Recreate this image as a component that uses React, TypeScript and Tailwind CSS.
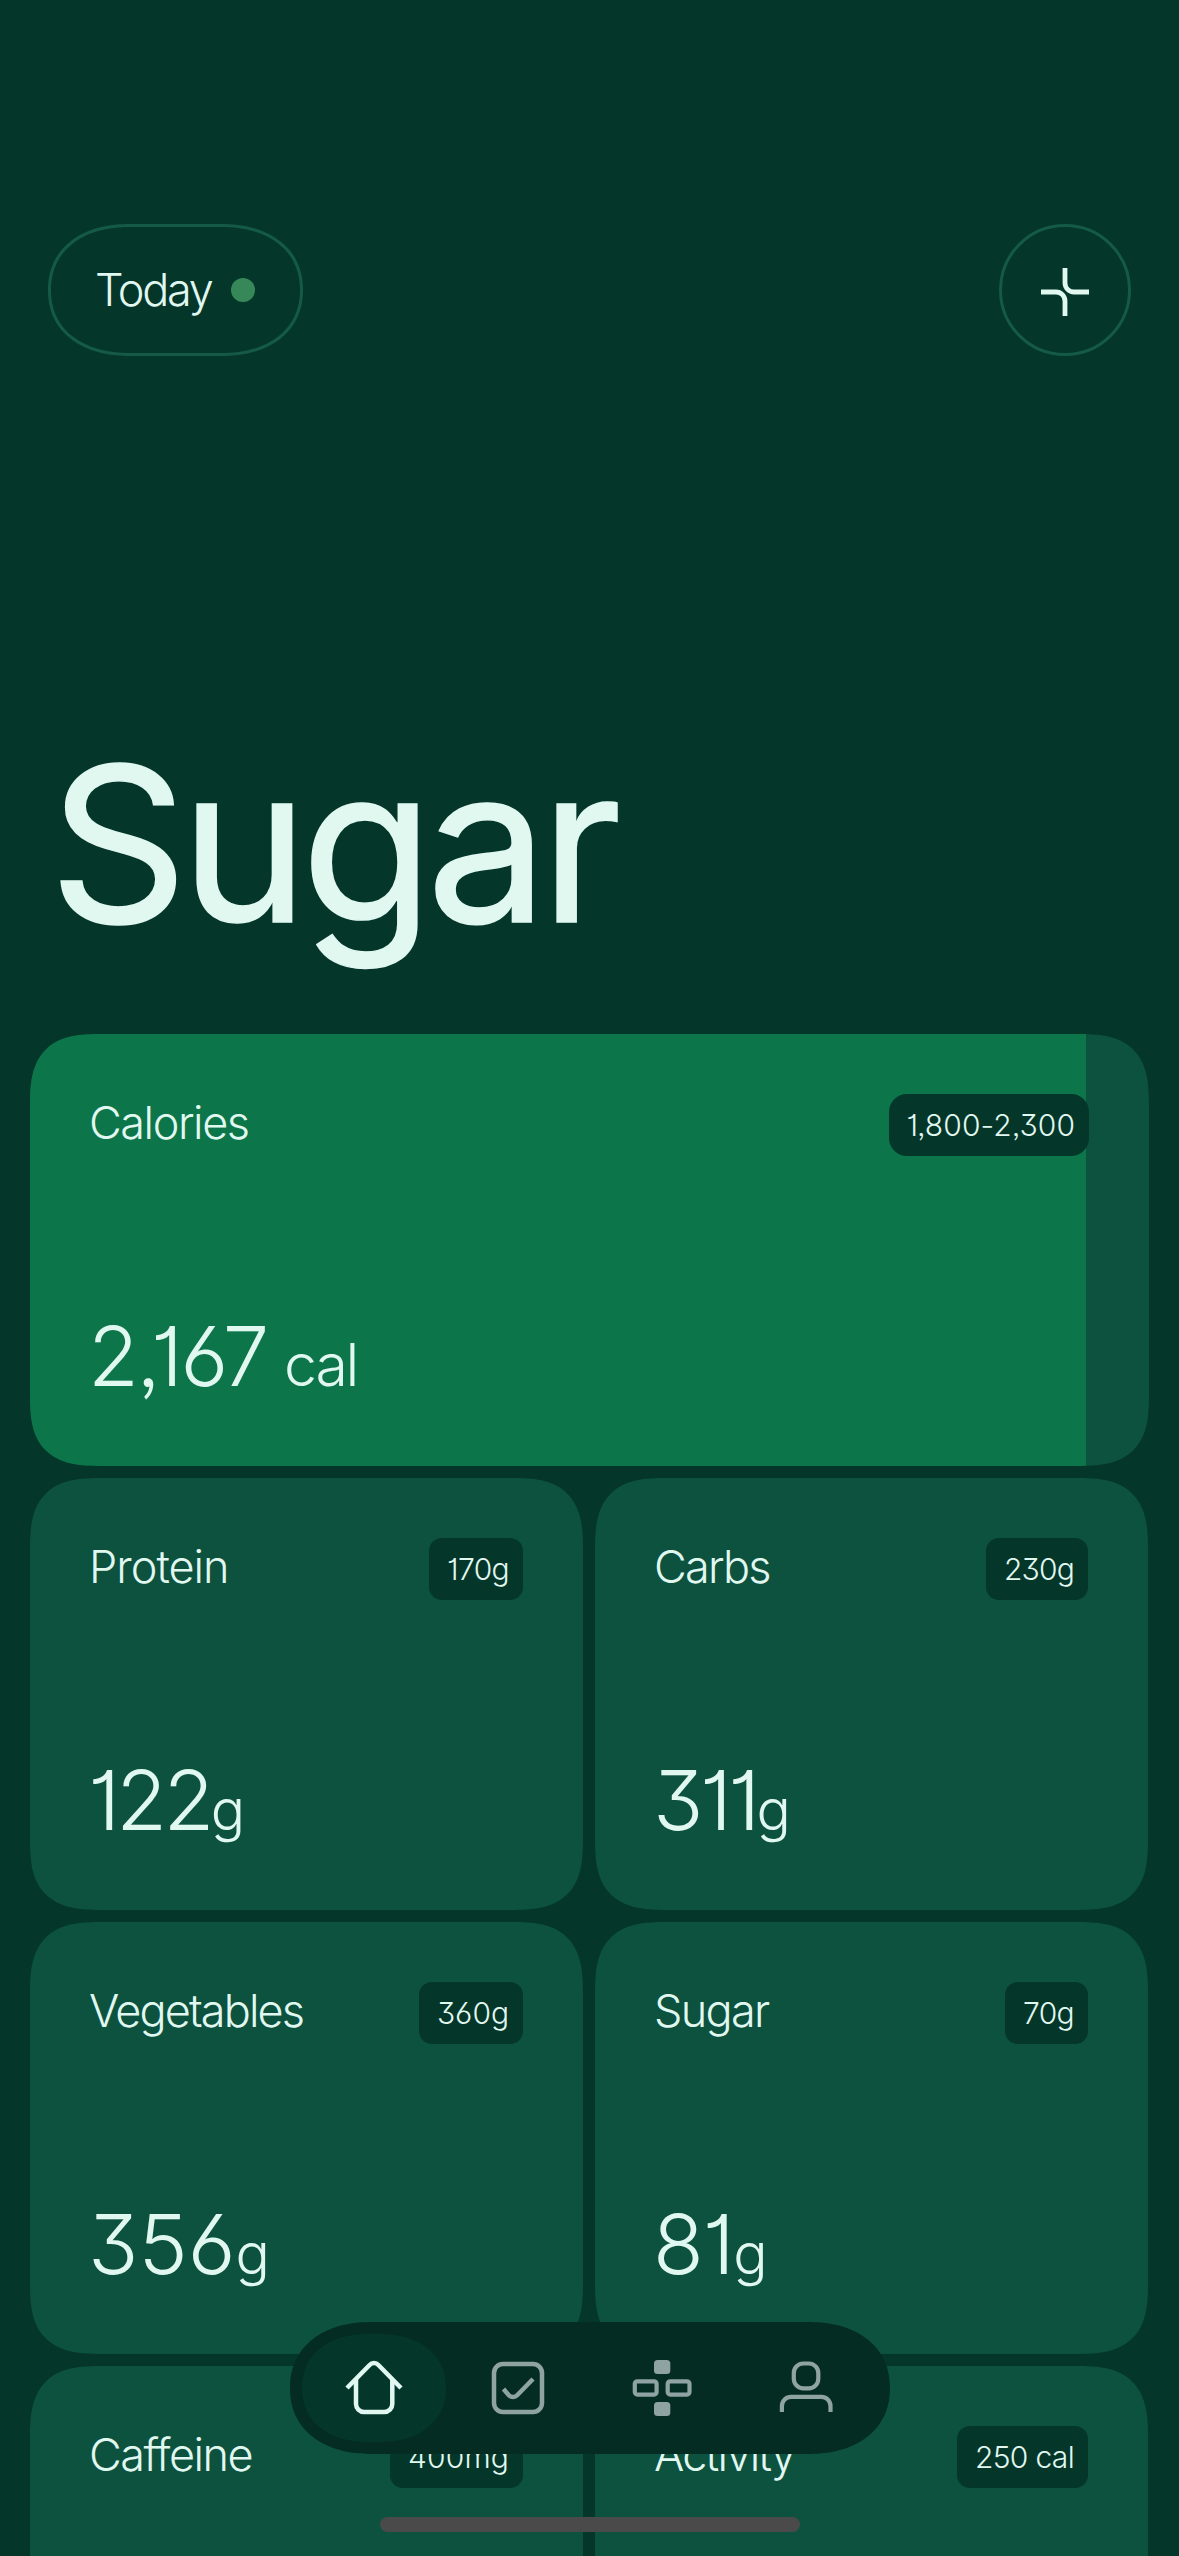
import type { ReactNode } from "react";
import clsx from "clsx";

type Metric = {
  label: string;
  target: string;
  value?: string;
  unit?: string;
  labelClass?: string;
  badgeClass?: string;
  valueClass?: string;
};

const metrics: Metric[] = [
  {
    label: "Protein",
    target: "170g",
    value: "122",
    unit: "g",
    labelClass: "tracking-[-0.022em]",
    badgeClass: "tracking-[-0.022em]",
    valueClass: "tracking-[-0.045em]",
  },
  {
    label: "Carbs",
    target: "230g",
    value: "311",
    unit: "g",
    badgeClass: "tracking-[-0.027em]",
    valueClass: "tracking-[-0.045em]",
  },
  { label: "Vegetables", target: "360g", value: "356", unit: "g", labelClass: "tracking-[-0.041em]", valueClass: "tracking-[0]" },
  { label: "Sugar", target: "70g", value: "81", unit: "g", badgeClass: "tracking-[-0.022em]", valueClass: "tracking-[-0.015em]" },
  { label: "Caffeine", target: "400mg", labelClass: "tracking-[-0.034em]", badgeClass: "tracking-[0.005em]" },
  { label: "Activity", target: "250 cal", badgeClass: "tracking-[-0.022em]" },
];

function PlusIcon() {
  return (
    <svg width="48" height="48" viewBox="0 0 48 48" fill="none" stroke="currentColor" strokeWidth="4.8">
      <path d="M24 0v15a9 9 0 0 0 9 9h15" />
      <path d="M0 24h15a9 9 0 0 1 9 9v15" />
    </svg>
  );
}

function HomeIcon() {
  return (
    <svg width="72" height="72" viewBox="0 0 72 72" fill="none" stroke="currentColor" strokeWidth="4.5">
      <path d="M9 36 31.6 13a6 6 0 0 1 8.8 0L63 36" />
      <path d="M18 27v25a8 8 0 0 0 8 8h20.3a8 8 0 0 0 8-8V27" />
    </svg>
  );
}

function TasksIcon() {
  return (
    <svg width="72" height="72" viewBox="0 0 72 72" fill="none" stroke="currentColor" strokeWidth="4.5">
      <rect x="12" y="12" width="48" height="48" rx="9" />
      <path d="m21.5 37 5.1 6a6 6 0 0 0 8.8 0L51 27" />
    </svg>
  );
}

function ModulesIcon() {
  return (
    <svg width="72" height="72" viewBox="0 0 72 72" fill="none" stroke="currentColor" strokeWidth="4.2">
      <rect x="28" y="8" width="16.3" height="14" rx="3.5" fill="currentColor" stroke="none" />
      <rect x="28" y="50" width="16.3" height="14" rx="3.5" fill="currentColor" stroke="none" />
      <rect x="8.8" y="29.3" width="21.8" height="13.3" rx="2.5" />
      <rect x="41.7" y="29.3" width="21.8" height="13.3" rx="2.5" />
    </svg>
  );
}

function ProfileIcon() {
  return (
    <svg width="72" height="72" viewBox="0 0 72 72" fill="none" stroke="currentColor" strokeWidth="4.2">
      <rect x="23.8" y="11.5" width="24.5" height="24.8" rx="9.5" />
      <path d="M11.9 60v-6a9.2 9.2 0 0 1 9.2-9.2h30.2a9.2 9.2 0 0 1 9.2 9.2v6" />
    </svg>
  );
}

function Badge({ children, className = "rounded-[13px]" }: { children: ReactNode; className?: string }) {
  return (
    <span className={clsx("flex h-[62px] items-center bg-[#04362a] pr-3.5 pl-[18px] text-[30px] font-light", className)}>
      {children}
    </span>
  );
}

function Label({ children, className = "tracking-[-0.038em]" }: { children: ReactNode; className?: string }) {
  return <h2 className={clsx("-ml-px text-[45px] leading-[58px] font-light", className)}>{children}</h2>;
}

function Value({ children, unit, className = "tracking-[-0.03em]" }: { children: ReactNode; unit?: string; className?: string }) {
  return (
    <p className={clsx("-ml-0.5 text-[83px] leading-[100px] font-light", className)}>
      {children}
      <span className="text-[57px] leading-none">{unit}</span>
    </p>
  );
}

function MetricCard({ label, target, value, unit, labelClass, badgeClass, valueClass }: Metric) {
  return (
    <div className="flex h-[432px] flex-col justify-between rounded-[72px] bg-[#0c523f] p-[60px] [corner-shape:superellipse(1.5)]">
      <div className="flex items-start justify-between">
        <Label className={labelClass}>{label}</Label>
        <Badge className={clsx("rounded-[13px]", badgeClass)}>{target}</Badge>
      </div>
      {value && (
        <Value unit={unit} className={valueClass}>
          {value}
        </Value>
      )}
    </div>
  );
}

function CaloriesCard() {
  const progress = (2170 / 2300) * 100;

  return (
    <div className="relative h-[432px] overflow-hidden rounded-[72px] bg-[#0c523f] [corner-shape:superellipse(1.5)]">
      <div className="absolute inset-y-0 left-0 bg-[#0c754a]" style={{ width: `${progress}%` }} />
      <div className="relative flex h-full flex-col justify-between p-[60px]">
        <div className="flex items-start justify-between">
          <Label className="tracking-[-0.032em]">Calories</Label>
          <Badge className="rounded-[18px] tracking-[0.003em]">1,800-2,300</Badge>
        </div>
        <Value className="tracking-[-0.027em]">
          2,167<span className="ml-[17px] text-[59px] leading-none">cal</span>
        </Value>
      </div>
    </div>
  );
}

function NavItem({ active, children }: { active?: boolean; children: ReactNode }) {
  return (
    <button
      className={clsx(
        "flex h-[108px] w-36 items-center justify-center rounded-[67px_/_54px] [corner-shape:superellipse(1.15)]",
        active ? "bg-[#04362a] text-[#e1f8f0]" : "text-[#8fa3a3]"
      )}
    >
      {children}
    </button>
  );
}

export default function App() {
  return (
    <div className="relative h-[2556px] w-[1179px] overflow-hidden bg-[#04362a] font-['Inter',sans-serif] text-[#e1f8f0] [font-feature-settings:'cv01','cv03','cv09','ss03']">
      {/* HEADER */}
      <header className="flex items-center justify-between px-12 pt-56">
        <button className="flex h-[132px] w-[255px] items-center justify-between rounded-[82px_/_66px] border-[3px] border-[#155a47] pr-[45px] pl-11 [corner-shape:superellipse(1.15)]">
          <span className="text-[45px] font-light tracking-[-0.05em]">Today</span>
          <span className="size-6 rounded-full bg-[#378859]" />
        </button>
        <button className="flex size-[132px] items-center justify-center rounded-full border-[3px] border-[#155a47] pt-[3px]">
          <PlusIcon />
        </button>
      </header>

      <h1 className="mt-[348px] pl-[49px] text-[216px] leading-[280px] tracking-[-0.033em] [-webkit-text-stroke:1.5px_#e1f8f0]">
        Sugar
      </h1>

      {/* METRICS */}
      <main className="mt-[50px] space-y-3 px-[30px]">
        <CaloriesCard />
        <div className="grid grid-cols-[553px_553px] gap-3">
          {metrics.map((metric) => (
            <MetricCard key={metric.label} {...metric} />
          ))}
        </div>
      </main>

      {/* TAB BAR */}
      <nav className="absolute top-[2322px] left-[290px] flex h-[132px] w-[600px] items-center rounded-[82px_/_66px] bg-[#042c22] px-3 [corner-shape:superellipse(1.15)]">
        <NavItem active>
          <HomeIcon />
        </NavItem>
        <NavItem>
          <TasksIcon />
        </NavItem>
        <NavItem>
          <ModulesIcon />
        </NavItem>
        <NavItem>
          <ProfileIcon />
        </NavItem>
      </nav>

      <div className="absolute top-[2517px] left-[380px] h-[15px] w-[420px] rounded-full bg-[#4a4a4a]" />
    </div>
  );
}
